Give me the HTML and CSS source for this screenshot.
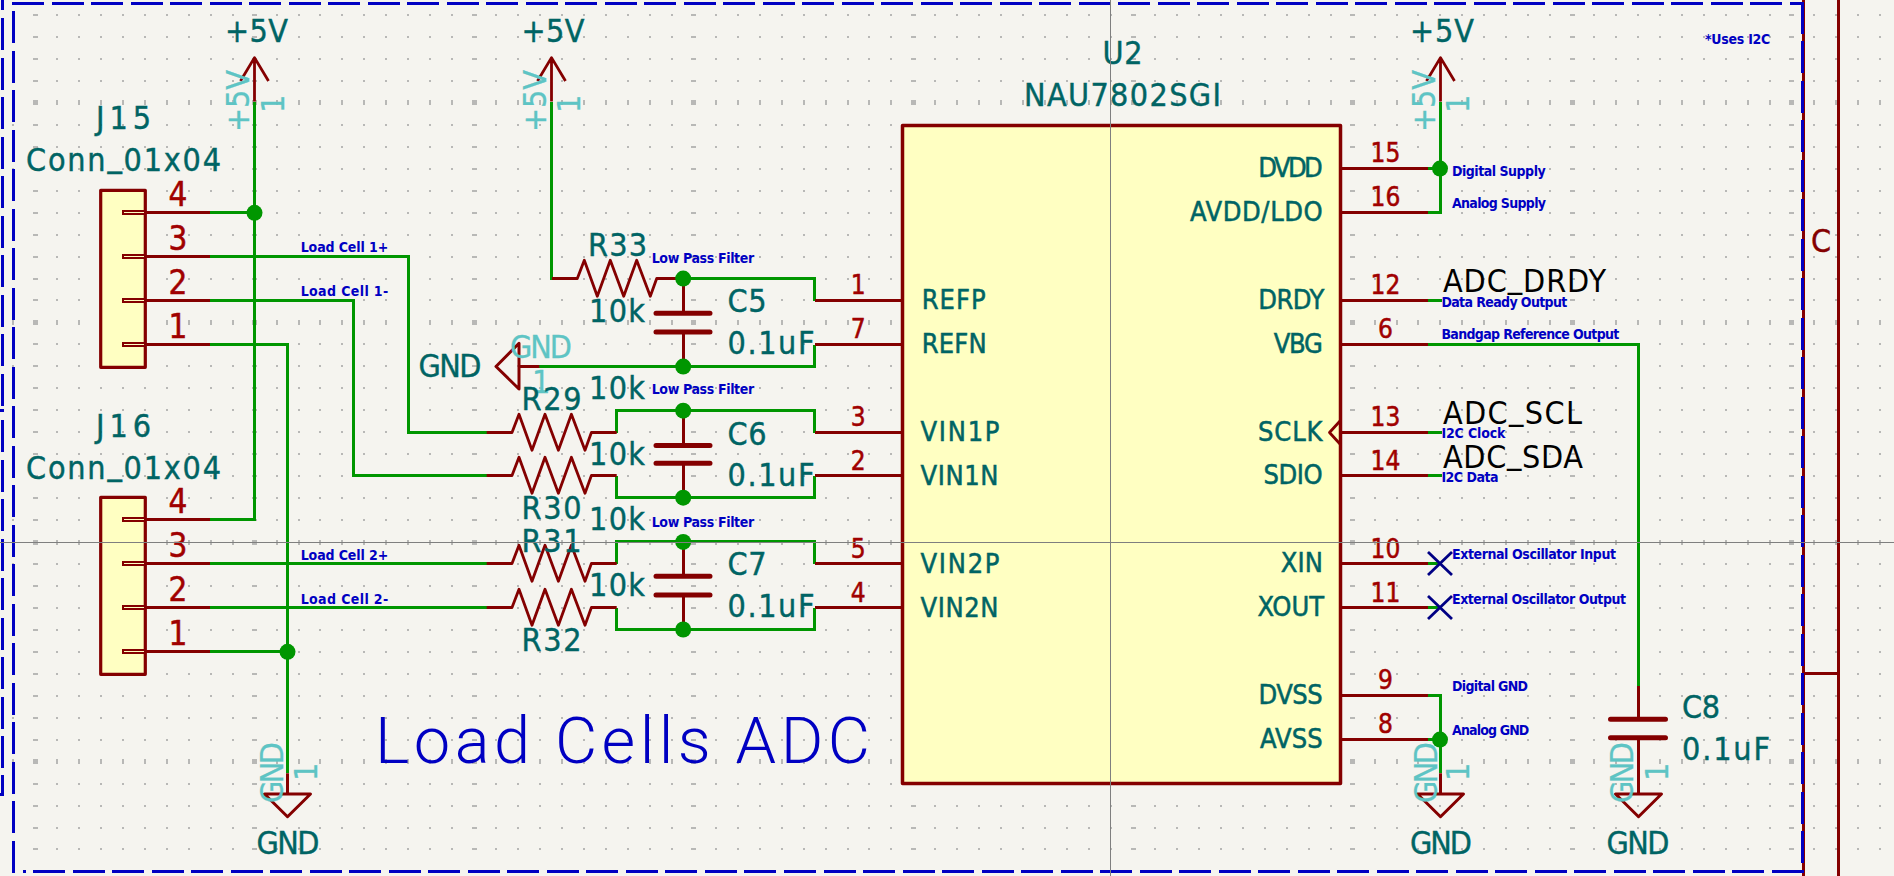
FILE: index.html
```html
<!DOCTYPE html>
<html lang="en">
<head>
<meta charset="utf-8">
<title>Load Cells ADC schematic</title>
<link rel="stylesheet" href="styles.css">
</head>
<body>
<svg class="sheet" width="1894" height="876" viewBox="0 0 1894 876" xmlns="http://www.w3.org/2000/svg">
  <defs>
    <path id="res" class="zig" d="M0 0H25.3l7-18.3 13 36 13-36 13.4 36 13-36 13.6 36 6.4-17.7H130"/>
    <g id="conn">
      <rect class="body" x="100.7" y="190.3" width="44.6" height="177"/>
      <path class="stub" d="M123 211.2H145V214.2H123ZM123 255.2H145V258.2H123ZM123 299.2H145V302.2H123ZM123 343.2H145V346.2H123Z"/>
      <path class="pin" d="M145 212.5H210M145 256.5H210M145 300.5H210M145 344.5H210"/>
    </g>
    <path id="pwr" class="zig" d="M0 101.5V57.6M-14 81L0 57.6 14 81"/>
    <path id="gnd" class="sym" d="M0 773.3V794M-23 794H23L0 816.7Z"/>
    <path id="nc" class="nc" d="M-12 -11.5L12 11.5M-12 11.5L12 -11.5"/>
  </defs>

  <path class="grid-minor" d="M12.04 15H1894M12.04 36.96H1894M12.04 58.92H1894M12.04 80.88H1894M12.04 124.8H1894M12.04 146.76H1894M12.04 168.72H1894M12.04 190.68H1894M12.04 212.64H1894M12.04 234.6H1894M12.04 256.56H1894M12.04 278.52H1894M12.04 300.48H1894M12.04 344.4H1894M12.04 366.36H1894M12.04 388.32H1894M12.04 410.28H1894M12.04 432.24H1894M12.04 454.2H1894M12.04 476.16H1894M12.04 498.12H1894M12.04 520.08H1894M12.04 564H1894M12.04 585.96H1894M12.04 607.92H1894M12.04 629.88H1894M12.04 651.84H1894M12.04 673.8H1894M12.04 695.76H1894M12.04 717.72H1894M12.04 739.68H1894M12.04 783.6H1894M12.04 805.56H1894M12.04 827.52H1894M12.04 849.48H1894"/>
  <path class="grid-row" d="M12.04 102.84H1894M12.04 322.44H1894M12.04 542.04H1894M12.04 761.64H1894"/>
  <path class="grid-col" d="M32.5 15H1894M32.5 36.96H1894M32.5 58.92H1894M32.5 80.88H1894M32.5 124.8H1894M32.5 146.76H1894M32.5 168.72H1894M32.5 190.68H1894M32.5 212.64H1894M32.5 234.6H1894M32.5 256.56H1894M32.5 278.52H1894M32.5 300.48H1894M32.5 344.4H1894M32.5 366.36H1894M32.5 388.32H1894M32.5 410.28H1894M32.5 432.24H1894M32.5 454.2H1894M32.5 476.16H1894M32.5 498.12H1894M32.5 520.08H1894M32.5 564H1894M32.5 585.96H1894M32.5 607.92H1894M32.5 629.88H1894M32.5 651.84H1894M32.5 673.8H1894M32.5 695.76H1894M32.5 717.72H1894M32.5 739.68H1894M32.5 783.6H1894M32.5 805.56H1894M32.5 827.52H1894M32.5 849.48H1894"/>
  <path class="grid-major" d="M32.5 102.84H1894M32.5 322.44H1894M32.5 542.04H1894M32.5 761.64H1894"/>

  <!-- drawing sheet -->
  <path class="frame" d="M1803.5 0V876M1838.5 0V876M1803.5 673.5H1838.5"/>
  <path class="border" d="M12 3.5H1804"/>
  <path class="border" d="M13.5 794V9"/>
  <path class="border" d="M13.5 801V833M13.5 841V871.5H26"/>
  <path class="border" d="M33.3 871.5H1804"/>
  <path class="border" d="M1802.5 1.5V871"/>
  <path class="border" d="M2.5 -21.5V408"/>
  <path class="border" d="M2.5 420V768"/>
  <path class="border-solid" d="M2.5 775V796M0 794.5H4M0 410.5H4"/>

  <!-- wires -->
  <path class="wire" d="M254.5 101.5V519.5H210M210 212.5H254.5M210 256.5H408.5V432.5H487M210 300.5H353.5V475.5H487M210 344.5H287.5V773.3M210 563.5H487M210 607.5H487M210 651.5H287.5"/>
  <path class="wire" d="M551.5 101.5V278.5H552M683.5 278.5H814.5V300.5M539.3 366.5H814.5V344.5M616.5 432.5V410.5H814.5V432.5M616.5 475.5V497.5H814.5V475.5M616.5 563.5V541.5H814.5V563.5M616.5 607.5V629.5H814.5V607.5"/>
  <path class="wire" d="M1440.5 101.5V212.5H1427.8M1427.8 168.5H1440.5M1427.8 300.5H1441.6M1427.8 344.5H1638.5V686M1427.8 432.5H1441.6M1427.8 475.5H1441.6M1427.8 563.5H1440.5M1427.8 607.5H1440.5M1427.8 695.5H1440.5V773.3M1427.8 739.5H1440.5"/>

  <!-- connectors -->
  <use href="#conn"/>
  <use href="#conn" y="307"/>
  <use href="#pwr" x="254.5"/>
  <use href="#pwr" x="551.5"/>
  <use href="#pwr" x="1440.5"/>
  <use href="#gnd" x="287.5"/>
  <use href="#gnd" x="1440.5"/>
  <use href="#gnd" x="1638.5"/>

  <!-- resistors -->
  <use href="#res" x="552" y="278.5"/>
  <use href="#res" x="486.7" y="432.5"/>
  <use href="#res" x="486.7" y="475.5"/>
  <use href="#res" x="486.7" y="563.5"/>
  <use href="#res" x="486.7" y="607.5"/>

  <!-- capacitors -->
  <path class="pin" d="M683.5 278V313M683.5 332V366M683.5 411V445M683.5 463V497M683.5 542V576M683.5 595V629M1638.5 686V719.3M1638.5 737.7V774"/>
  <path class="plate" d="M656 313.3H710M656 332H710M656 445.5H710M656 463.3H710M656 576.3H710M656 595H710M1610.5 719.3H1665.5M1610.5 737.7H1665.5"/>

  <!-- gnd flag at left -->
  <path class="sym" d="M539.3 366.5H519M519 343.3V389L496 366.5Z"/>

  <!-- IC -->
  <rect class="body ic" x="902.5" y="125.5" width="438" height="658"/>
  <path class="pin" d="M814.5 300.5H902M814.5 344.5H902M814.5 432.5H902M814.5 475.5H902M814.5 563.5H902M814.5 607.5H902M1340.8 168.5H1427.8M1340.8 212.5H1427.8M1340.8 300.5H1427.8M1340.8 344.5H1427.8M1340.8 432.5H1427.8M1340.8 475.5H1427.8M1340.8 563.5H1427.8M1340.8 607.5H1427.8M1340.8 695.5H1427.8M1340.8 739.5H1427.8"/>
  <path class="zig" d="M1340 421L1329.5 432.5 1340 444"/>
  <use href="#nc" x="1440" y="563.5"/>
  <use href="#nc" x="1440" y="607.5"/>

  <!-- junctions -->
  <circle class="dot" cx="254.5" cy="212.8" r="8"/>
  <circle class="dot" cx="287.5" cy="651.8" r="8"/>
  <circle class="dot" cx="683.2" cy="278.6" r="8"/>
  <circle class="dot" cx="683.2" cy="366.6" r="8"/>
  <circle class="dot" cx="683.2" cy="410.7" r="8"/>
  <circle class="dot" cx="683.2" cy="497.7" r="8"/>
  <circle class="dot" cx="683.2" cy="541.9" r="8"/>
  <circle class="dot" cx="683.2" cy="629.5" r="8"/>
  <circle class="dot" cx="1440" cy="168.6" r="8"/>
  <circle class="dot" cx="1440" cy="739.6" r="8"/>

  <!-- pin names of power ports, faint -->
  <g class="t ghost">
    <text x="249" y="132" textLength="62" transform="rotate(-90 249 132)">+5V</text>
    <text x="284" y="113" transform="rotate(-90 284 113)">1</text>
    <text x="546" y="132" textLength="62" transform="rotate(-90 546 132)">+5V</text>
    <text x="580" y="113" transform="rotate(-90 580 113)">1</text>
    <text x="1434.8" y="132" textLength="62" transform="rotate(-90 1434.8 132)">+5V</text>
    <text x="1469" y="113" transform="rotate(-90 1469 113)">1</text>
    <text x="283" y="803" textLength="61" transform="rotate(-90 283 803)">GND</text>
    <text x="317.3" y="781" transform="rotate(-90 317.3 781)">1</text>
    <text x="1436.9" y="803" textLength="61" transform="rotate(-90 1436.9 803)">GND</text>
    <text x="1469" y="781" transform="rotate(-90 1469 781)">1</text>
    <text x="1632.7" y="803" textLength="61" transform="rotate(-90 1632.7 803)">GND</text>
    <text x="1667.7" y="781" transform="rotate(-90 1667.7 781)">1</text>
    <text x="510" y="358.3" textLength="62">GND</text>
    <text x="532" y="393">1</text>
  </g>

  <!-- references and values -->
  <g class="t ref">
    <text x="225" y="42.3" textLength="63">+5V</text>
    <text x="521.5" y="42.3" textLength="63">+5V</text>
    <text x="1410" y="42.3" textLength="64">+5V</text>
    <text x="96" y="129.3" textLength="55">J15</text>
    <text x="26" y="171.3" textLength="195">Conn<tspan class="low">_</tspan><tspan class="back">01x04</tspan></text>
    <text x="96" y="437.3" textLength="55">J16</text>
    <text x="26" y="479.3" textLength="195">Conn<tspan class="low">_</tspan><tspan class="back">01x04</tspan></text>
    <text x="256.5" y="854.3" textLength="63">GND</text>
    <text x="1410" y="854.3" textLength="62">GND</text>
    <text x="1606.5" y="854.3" textLength="63">GND</text>
    <text x="418.5" y="376.7" textLength="63">GND</text>
    <text x="588" y="256" textLength="59">R33</text>
    <text x="521.5" y="410" textLength="60">R29</text>
    <text x="521.5" y="518.7" textLength="60">R30</text>
    <text x="521.5" y="552" textLength="60">R31</text>
    <text x="521.5" y="651.3" textLength="60">R32</text>
    <text x="589" y="321.7" textLength="56">10k</text>
    <text x="589" y="399" textLength="56">10k</text>
    <text x="589" y="465.3" textLength="56">10k</text>
    <text x="589" y="530" textLength="56">10k</text>
    <text x="589" y="596" textLength="56">10k</text>
    <text x="727.5" y="311.7" textLength="39">C5</text>
    <text x="727.5" y="354" textLength="87">0.1uF</text>
    <text x="727.5" y="444.5" textLength="39">C6</text>
    <text x="727.5" y="486" textLength="87">0.1uF</text>
    <text x="727.5" y="575" textLength="39">C7</text>
    <text x="727.5" y="617" textLength="87">0.1uF</text>
    <text x="1682" y="718.3" textLength="38">C8</text>
    <text x="1682" y="760.3" textLength="88">0.1uF</text>
    <text x="1102.5" y="64.3" textLength="40">U2</text>
    <text x="1024" y="105.7" textLength="197">NAU7802SGI</text>
  </g>

  <!-- IC pin names -->
  <g class="t pname">
    <text x="921.7" y="309.3" textLength="64">REFP</text>
    <text x="921.7" y="353.3" textLength="65">REFN</text>
    <text x="920.5" y="441" textLength="79">VIN1P</text>
    <text x="920.5" y="485" textLength="78">VIN1N</text>
    <text x="920.5" y="572.7" textLength="79">VIN2P</text>
    <text x="920.5" y="616.7" textLength="78">VIN2N</text>
    <text x="1258.3" y="176.7" textLength="64.4">DVDD</text>
    <text x="1190" y="220.7" textLength="132.7">AVDD/LDO</text>
    <text x="1258.3" y="309" textLength="66">DRDY</text>
    <text x="1273.8" y="352.7" textLength="49">VBG</text>
    <text x="1258" y="441" textLength="64.5">SCLK</text>
    <text x="1263.5" y="484.3" textLength="59">SDIO</text>
    <text x="1280.8" y="572" textLength="42">XIN</text>
    <text x="1257.4" y="616" textLength="66.6">XOUT</text>
    <text x="1258.6" y="704.3" textLength="64">DVSS</text>
    <text x="1260" y="748.3" textLength="62.7">AVSS</text>
  </g>

  <!-- pin numbers -->
  <g class="t num big">
    <text x="178" y="206.3">4</text><text x="178" y="250">3</text><text x="178" y="294">2</text><text x="178" y="338.3">1</text>
    <text x="178" y="513.3">4</text><text x="178" y="557">3</text><text x="178" y="601">2</text><text x="178" y="645.3">1</text>
  </g>
  <g class="t num">
    <text x="858.3" y="294.3">1</text><text x="858.3" y="338.3">7</text><text x="858.3" y="426">3</text><text x="858.3" y="470.3">2</text><text x="858.3" y="557.7">5</text><text x="858.3" y="601.7">4</text>
    <text x="1385.5" y="162.3">15</text><text x="1385.5" y="206">16</text><text x="1385.5" y="294.3">12</text><text x="1385.5" y="338.3">6</text><text x="1385.5" y="426">13</text><text x="1385.5" y="470.3">14</text><text x="1385.5" y="557.7">10</text><text x="1385.5" y="601.7">11</text><text x="1385.5" y="689.3">9</text><text x="1385.5" y="733.3">8</text>
  </g>

  <!-- global labels -->
  <g class="t label">
    <text x="1443" y="292.3" textLength="163">ADC<tspan class="low">_</tspan><tspan class="back">DRDY</tspan></text>
    <text x="1443" y="424" textLength="139">ADC<tspan class="low">_</tspan><tspan class="back">SCL</tspan></text>
    <text x="1443" y="468.3" textLength="140">ADC<tspan class="low">_</tspan><tspan class="back">SDA</tspan></text>
  </g>

  <!-- notes -->
  <g class="t note">
    <text x="300.7" y="251.7" textLength="87.5">Load Cell 1+</text>
    <text x="300.7" y="295.7" textLength="87.5">Load Cell 1-</text>
    <text x="300.7" y="559.7" textLength="87.5">Load Cell 2+</text>
    <text x="300.7" y="603.7" textLength="87.5">Load Cell 2-</text>
    <text x="651.7" y="262.7" textLength="102.5">Low Pass Filter</text>
    <text x="651.7" y="394.3" textLength="102.5">Low Pass Filter</text>
    <text x="651.7" y="526.7" textLength="102.5">Low Pass Filter</text>
    <text x="1452" y="175.7" textLength="93.7">Digital Supply</text>
    <text x="1452" y="207.7" textLength="94">Analog Supply</text>
    <text x="1441.4" y="306.7" textLength="126">Data Ready Output</text>
    <text x="1441.4" y="339.3" textLength="178">Bandgap Reference Output</text>
    <text x="1441.4" y="438.3" textLength="64">I2C Clock</text>
    <text x="1441.4" y="482.3" textLength="57">I2C Data</text>
    <text x="1452" y="559.3" textLength="164">External Oscillator Input</text>
    <text x="1452" y="603.7" textLength="174">External Oscillator Output</text>
    <text x="1452" y="691" textLength="76">Digital GND</text>
    <text x="1452" y="735" textLength="77.3">Analog GND</text>
    <text x="1705" y="43.7" textLength="65.3">*Uses I2C</text>
  </g>

  <text class="t title" x="375" y="763.3" textLength="495">Load Cells ADC</text>
  <text class="t sheet-c" x="1811" y="251.7">C</text>

  <path class="cursor" d="M0 542.5H1894M1110.5 0V876"/>
</svg>
</body>
</html>
```
FILE: styles.css
```css
html, body {
  margin: 0;
  padding: 0;
  background: #f5f4ef;
  overflow: hidden;
}

.sheet {
  display: block;
  background: #f5f4ef;
}

.grid-minor,
.grid-row,
.grid-col,
.grid-major {
  fill: none;
  stroke: #b8b8b6;
  shape-rendering: crispEdges;
}
.grid-minor { stroke-width: 2; stroke-dasharray: 2 19.96; }
.grid-row { stroke-width: 5; stroke-dasharray: 2 19.96; }
.grid-col { stroke-width: 2; stroke-dasharray: 5 214.6; }
.grid-major { stroke-width: 5; stroke-dasharray: 5 214.6; }

.frame { fill: none; stroke: #840000; stroke-width: 3; shape-rendering: crispEdges; }
.border { fill: none; stroke: #0000c2; stroke-width: 3; stroke-dasharray: 32 7.51; shape-rendering: crispEdges; }
.border-solid { fill: none; stroke: #0000c2; stroke-width: 3; shape-rendering: crispEdges; }

.wire { fill: none; stroke: #009600; stroke-width: 3; shape-rendering: crispEdges; }
.dot { fill: #009600; }
.pin { fill: none; stroke: #840000; stroke-width: 3; shape-rendering: crispEdges; }
.zig { fill: none; stroke: #840000; stroke-width: 2.8; stroke-linejoin: round; }
.sym { fill: none; stroke: #840000; stroke-width: 3; stroke-linejoin: round; }
.stub { fill: #ffffc2; stroke: #840000; stroke-width: 2; shape-rendering: crispEdges; }
.plate { fill: none; stroke: #840000; stroke-width: 5; stroke-linecap: round; }
.body { fill: #ffffc2; stroke: #840000; stroke-width: 3.2; stroke-linejoin: round; }
.ic { stroke-width: 3.5; }
.nc { fill: none; stroke: #000084; stroke-width: 2.8; }
.cursor { fill: none; stroke: #7f7f7f; stroke-width: 1; }

.t { font-family: "DejaVu Sans", "Liberation Sans", sans-serif; font-stretch: condensed; }
.low { baseline-shift: 5px; }
.back { baseline-shift: 0; }
.ghost { fill: #5ec4c4; stroke: #5ec4c4; stroke-width: 0.3; font-size: 32px; }
.ref { fill: #006464; stroke: #006464; stroke-width: 0.4; font-size: 32px; }
.pname { fill: #006464; font-size: 27px; stroke: #006464; stroke-width: 0.5; }
.num { fill: #a00000; stroke: #a00000; stroke-width: 0.5; font-size: 26px; text-anchor: middle; }
.big { font-size: 33px; }
.label { fill: #000000; font-size: 32px; }
.note { fill: #0000c2; font-size: 14px; font-weight: 700; }
.title { fill: #0000c2; font-family: Roboto, "DejaVu Sans", sans-serif; font-weight: 300; font-stretch: normal; font-size: 65px; }
.sheet-c { fill: #840000; stroke: #840000; stroke-width: 0.4; font-size: 32px; }
```
